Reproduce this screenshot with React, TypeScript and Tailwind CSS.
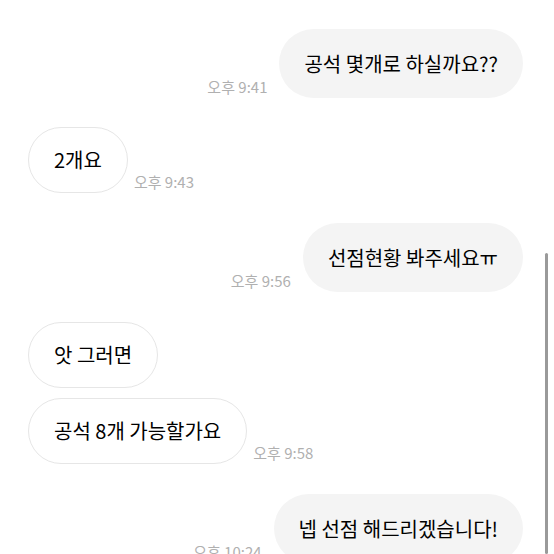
const font = { fontFamily: '"Noto Sans CJK KR", "Noto Sans", sans-serif' };

type Msg = { text: string; mine: boolean; time?: string; gap: string };

const messages: Msg[] = [
  { text: '공석 몇개로 하실까요??', mine: true, time: '오후 9:41', gap: 'mt-[29px]' },
  { text: '2개요', mine: false, time: '오후 9:43', gap: 'mt-[29px]' },
  { text: '선점현황 봐주세요ㅠ', mine: true, time: '오후 9:56', gap: 'mt-[30px]' },
  { text: '앗 그러면', mine: false, gap: 'mt-[30px]' },
  { text: '공석 8개 가능할가요', mine: false, time: '오후 9:58', gap: 'mt-[10px]' },
  { text: '넵 선점 해드리겠습니다!', mine: true, time: '오후 10:24', gap: 'mt-[30px]' },
];

function Time({ time }: { time: string }) {
  return (
    <span className="mb-[3px] text-[15px] leading-[16px] text-[#b0b0b0] whitespace-nowrap">{time}</span>
  );
}

function Bubble({ msg }: { msg: Msg }) {
  return (
    <div
      className={`flex items-center rounded-full px-[25px] text-[20px] text-black whitespace-nowrap ${
        msg.mine ? 'bg-[#f4f4f4] h-[69px]' : 'bg-white h-[66px] border border-[#e6e6e6]'
      }`}
    >
      {msg.text}
    </div>
  );
}

export default function App() {
  return (
    <div className="relative h-[554px] w-[554px] overflow-hidden bg-white" style={font}>
      <div className="flex flex-col">
        {messages.map((m, i) =>
          m.mine ? (
            <div key={i} className={`${m.gap} flex items-end justify-end gap-[12px] pr-[31px]`}>
              {m.time && <Time time={m.time} />}
              <Bubble msg={m} />
            </div>
          ) : (
            <div key={i} className={`${m.gap} flex items-end gap-[6px] pl-[28px]`}>
              <Bubble msg={m} />
              {m.time && <Time time={m.time} />}
            </div>
          )
        )}
      </div>

      {/* scroll indicator */}
      <div className="absolute right-[6px] top-[253px] bottom-0 w-[3px] rounded-full bg-[#9a9a9a]" />
    </div>
  );
}
